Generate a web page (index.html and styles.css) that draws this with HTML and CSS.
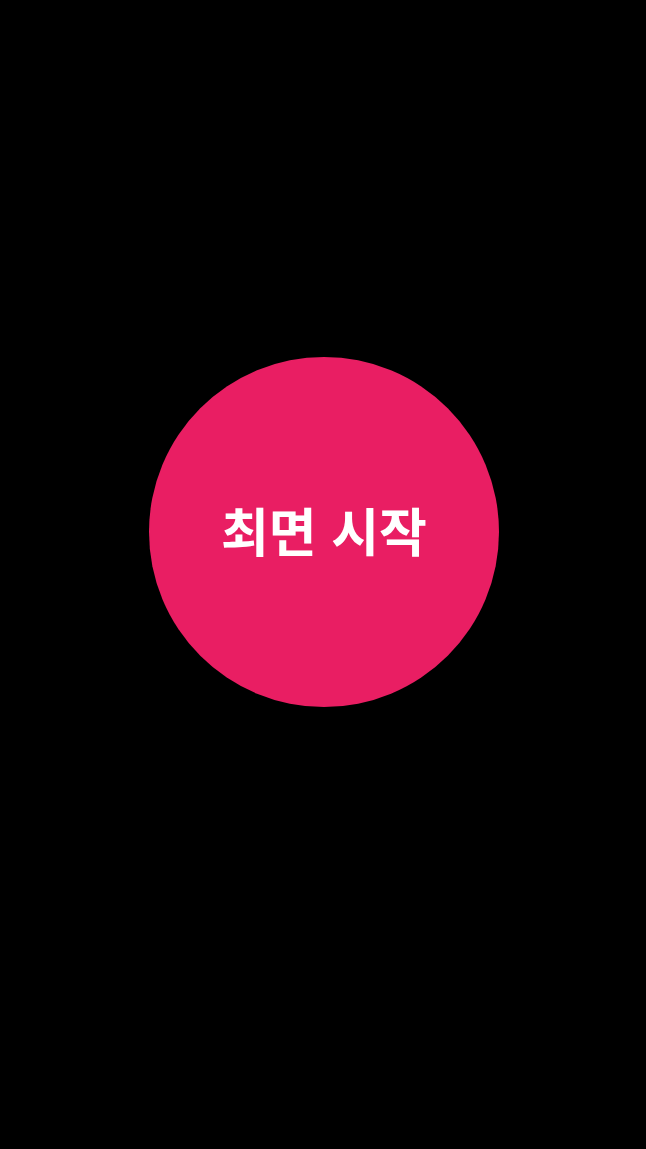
FILE: index.html
```html
<!DOCTYPE html>
<html lang="ko">
<head>
<meta charset="utf-8">
<link rel="stylesheet" href="styles.css">
</head>
<body>
<main class="screen">
  <button class="start"><span class="label">최면 시작</span></button>
</main>
</body>
</html>
```
FILE: styles.css
```css
html, body {
  margin: 0;
  padding: 0;
  background: #000;
}
.screen {
  width: 646px;
  height: 1149px;
  display: flex;
  justify-content: center;
  align-items: flex-start;
  padding-top: 357px;
  box-sizing: border-box;
}
.start {
  width: 350px;
  height: 350px;
  margin-left: 2px;
  border: none;
  border-radius: 50%;
  background: #e91e63;
  color: #fff;
  font-family: "Noto Sans CJK KR", "Noto Sans", sans-serif;
  font-weight: 700;
  font-size: 52px;
  line-height: 1;
  padding: 0;
  display: flex;
  align-items: center;
  justify-content: center;
}
.label {
  display: block;
  margin-top: -4px;
}
```
